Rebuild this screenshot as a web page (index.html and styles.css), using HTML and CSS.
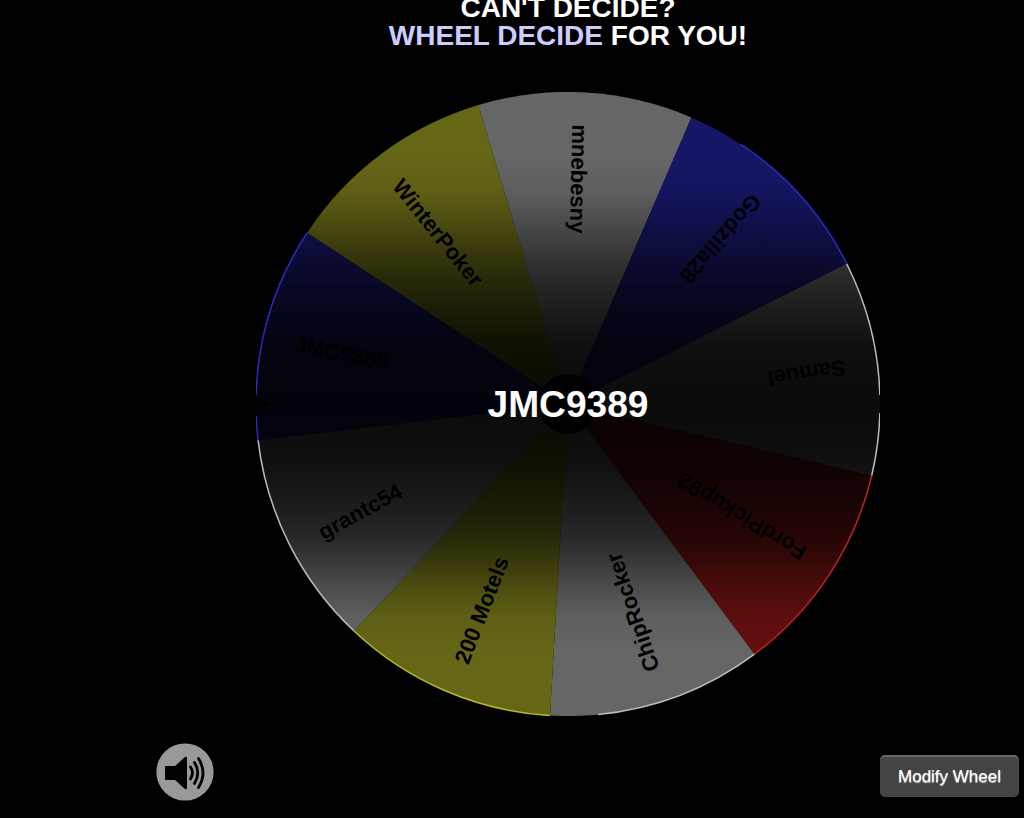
FILE: index.html
```html
<!DOCTYPE html>
<html lang="en">
<head>
<meta charset="utf-8">
<meta name="viewport" content="width=device-width, initial-scale=1">
<title>Wheel Decide</title>
<link rel="stylesheet" href="styles.css">
</head>
<body>
<main class="page">
  <h1 class="tagline">CAN'T DECIDE?<br><span class="brand">WHEEL DECIDE</span> FOR YOU!</h1>
  <svg class="wheel" viewBox="-311 -311 622 622" role="img" aria-label="Wheel stopped on JMC9389">
    <defs>
      <linearGradient id="shade" x1="0" y1="0" x2="0" y2="1">
        <stop offset="0" stop-opacity=".6"/>
        <stop offset=".1" stop-opacity=".6"/>
        <stop offset=".16" stop-opacity=".63"/>
        <stop offset=".2" stop-opacity=".69"/>
        <stop offset=".25" stop-opacity=".77"/>
        <stop offset=".3" stop-opacity=".84"/>
        <stop offset=".35" stop-opacity=".89"/>
        <stop offset=".41" stop-opacity=".94"/>
        <stop offset=".5" stop-opacity=".96"/>
        <stop offset=".59" stop-opacity=".94"/>
        <stop offset=".65" stop-opacity=".9"/>
        <stop offset=".71" stop-opacity=".85"/>
        <stop offset=".75" stop-opacity=".78"/>
        <stop offset=".8" stop-opacity=".69"/>
        <stop offset=".84" stop-opacity=".63"/>
        <stop offset=".9" stop-opacity=".6"/>
        <stop offset="1" stop-opacity=".6"/>
      </linearGradient>
      <path id="slice" d="M0 0L-292.3 -106.4A311 311 0 0 0 -292.3 106.4Z"/>
    </defs>
    <g>
      <use href="#slice" class="blue" transform="rotate(13.3)"/>
      <use href="#slice" class="yellow" transform="rotate(53.3)"/>
      <use href="#slice" class="white" transform="rotate(93.3)"/>
      <use href="#slice" class="blue" transform="rotate(133.3)"/>
      <use href="#slice" class="white" transform="rotate(173.3)"/>
      <use href="#slice" class="red" transform="rotate(213.3)"/>
      <use href="#slice" class="white" transform="rotate(253.3)"/>
      <use href="#slice" class="yellow" transform="rotate(293.3)"/>
      <use href="#slice" class="white" transform="rotate(333.3)"/>
    </g>
    <g class="names">
      <text x="-279" y="2" transform="rotate(11.3)">JMC9389</text>
      <text x="-279" y="2" transform="rotate(51.3)">WinterPoker</text>
      <text x="-279" y="2" transform="rotate(91.3)">mnebesny</text>
      <text x="-279" y="2" transform="rotate(131.3)">Godzilla28</text>
      <text x="-279" y="2" transform="rotate(171.3)">Samuel</text>
      <text x="-279" y="2" transform="rotate(211.3)">FordPickup92</text>
      <text x="-279" y="2" transform="rotate(251.3)">ChipRocker</text>
      <text x="-279" y="2" transform="rotate(291.3)">200 Motels</text>
      <text x="-279" y="2" transform="rotate(331.3)">grantc54</text>
    </g>
    <circle r="30"/>
    <path d="M-312 -7L-295 0L-312 7Z"/>
    <circle r="312" fill="url(#shade)"/>
    <g class="rim">
      <path class="rim-blue" d="M172.5 -258.8A311 311 0 0 1 277.8 -139.8M-310.9 -9A311 311 0 0 1 -259.9 -170.7M-310.8 12A311 311 0 0 0 -308.9 36.3"/>
      <path class="rim-white" d="M277.8 -139.8A311 311 0 0 1 310.9 -9M310.9 9A311 311 0 0 1 302.7 71.5M185.9 249.4A311 311 0 0 1 30 309.6M-213.3 226.3A311 311 0 0 1 -308.9 36.3"/>
      <path class="rim-red" d="M302.7 71.5A311 311 0 0 1 185.9 249.4"/>
      <path class="rim-yellow" d="M-17.9 310.5A311 311 0 0 1 -213.3 226.3"/>
    </g>
    <text class="result" y="13">JMC9389</text>
  </svg>
</main>
<footer class="controls">
  <button class="sound" type="button" aria-label="Toggle sound">
    <svg viewBox="0 0 58 58" aria-hidden="true">
      <circle cx="29" cy="29" r="28.6" fill="#999"/>
      <path d="M10 23Q9 23 9 24V36Q9 37 10 37H19L29 46Q31 47 31 45V15Q31 13 29 14L19 23Z"/>
      <path d="M34.500 24Q38.500 29.500 34.500 36M38.500 19.500Q45 29.500 38.500 40.500M42.500 15.500Q51.500 30 42.500 44.500" fill="none" stroke="#000" stroke-width="2.800" stroke-linecap="round"/>
    </svg>
  </button>
  <button class="modify" type="button">Modify Wheel</button>
</footer>
</body>
</html>
```
FILE: styles.css
```css
body {
  margin: 0;
  background: #000;
  color: #fff;
  font-family: "Liberation Sans", Arial, sans-serif;
  overflow-x: hidden;
}

.page {
  display: flex;
  flex-direction: column;
  align-items: center;
  gap: 42px;
  margin-top: -6px;
  padding-left: 112px;
}

.tagline {
  margin: 0;
  font-size: 28px;
  line-height: 28px;
  text-align: center;
}

.brand {
  color: #ccf;
}

.wheel {
  display: block;
  width: 100%;
  max-width: 624px;
}

.blue { fill: #3737ff; }
.yellow { fill: #ffff3a; }
.white { fill: #fff; }
.red { fill: #f82424; }

.names {
  font-size: 22px;
  font-weight: bold;
}

.rim {
  fill: none;
  stroke-width: 1.5;
}

.rim-blue { stroke: #2a2ac0; }
.rim-white { stroke: #bbb; }
.rim-red { stroke: #bb2222; }
.rim-yellow { stroke: #b8b828; }

.result {
  fill: #fff;
  font-size: 37px;
  font-weight: bold;
  text-anchor: middle;
}

.controls {
  display: flex;
  justify-content: space-between;
  align-items: flex-end;
  padding: 27px 5px 17px 156px;
}

.sound {
  width: 58px;
  height: 58px;
  padding: 0;
  border: 0;
  border-radius: 50%;
  background: none;
}

.sound svg {
  display: block;
}

.modify {
  margin-bottom: 4px;
  padding: 0 18px;
  height: 42px;
  border: 0;
  border-top: 2px solid #666;
  border-radius: 5px;
  background: #444;
  color: #fff;
  font-family: inherit;
  font-size: 17px;
  text-shadow: 0 1px 1px #ccc;
}
```
